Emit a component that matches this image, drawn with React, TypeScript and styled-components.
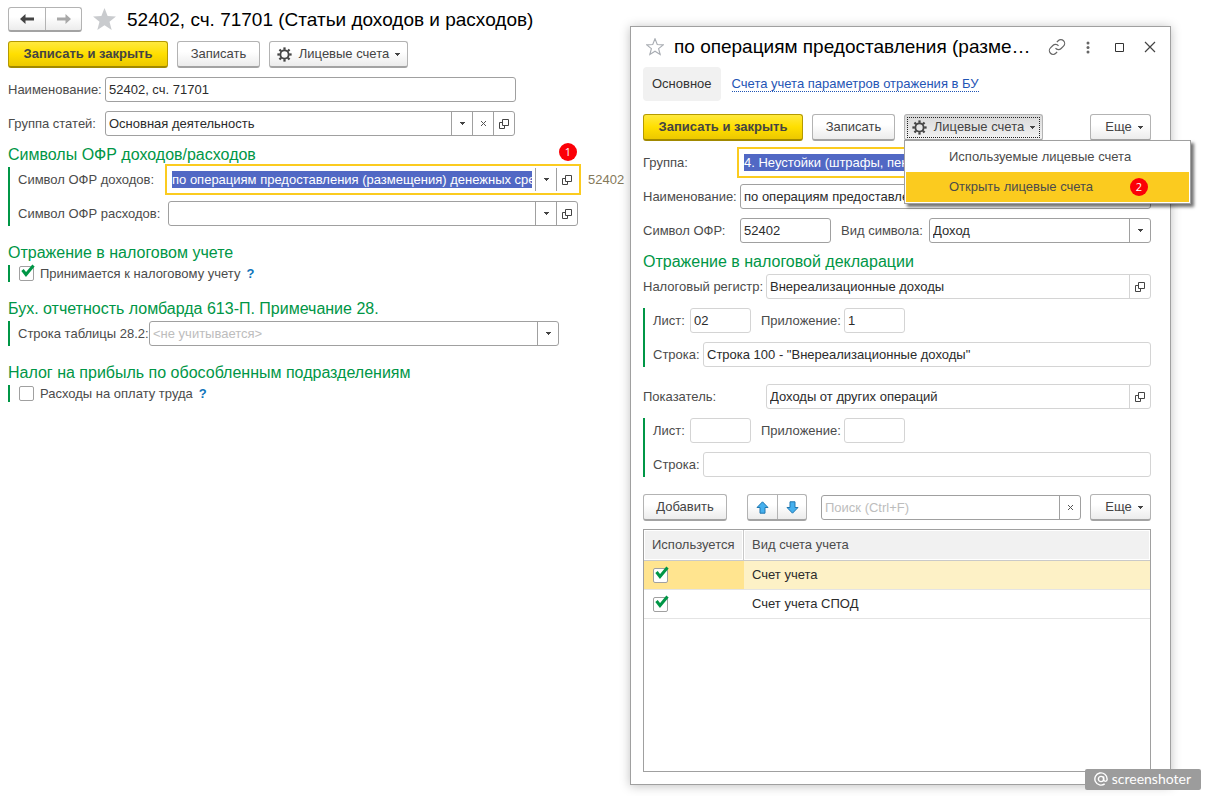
import React from "react";
import styled, { createGlobalStyle, css } from "styled-components";

const green = "#009646";
const line = "#a0a0a0";
const lightLine = "#d4d4d4";
const accent = "#fbcb1f";

const GlobalStyle = createGlobalStyle`
  *, *::before, *::after { box-sizing: border-box; }
  body {
    margin: 0;
    background: #fff;
    color: #4b4b4b;
    font-family: "Liberation Sans", Arial, sans-serif;
    font-size: 13px;
    line-height: 16px;
  }
  button, input, select { font: inherit; color: inherit; margin: 0; }
`;

const Page = styled.div`
  position: relative;
  display: flex;
  min-height: 100vh;
`;

const Main = styled.main`
  flex: 1 1 0;
  min-width: 0;
  padding: 7px 4px 16px 8px;
  display: flex;
  flex-direction: column;
  gap: 9px;
`;

const Bar = styled.div`
  display: flex;
  align-items: center;
  gap: 9px;
`;

const Spacer = styled.div`
  flex: 1;
`;

const Heading = styled.h1`
  margin: 0;
  color: #000;
  font-size: 19px;
  font-weight: 400;
  line-height: 24px;
  white-space: nowrap;
`;

const Button = styled.button<{ $primary?: boolean; $active?: boolean; $width: number }>`
  display: inline-flex;
  align-items: center;
  justify-content: center;
  flex: none;
  min-width: ${(p) => p.$width}px;
  height: 27px;
  padding: 0 6px;
  border: 1px solid #b3b3b3;
  border-bottom: 2px solid #a3a3a3;
  border-radius: 3px;
  background: linear-gradient(#fff 40%, #ececec);
  color: #444;
  white-space: nowrap;
  ${(p) =>
    p.$primary &&
    css`
      border-color: #b59a00 #b59a00 #a18900;
      background: linear-gradient(#ffe93f, #ffdf00 50%, #ecc800);
      font-weight: 700;
    `}
  ${(p) =>
    p.$active &&
    css`
      background: linear-gradient(#d9d9d9, #f2f2f2);
      outline: 1px dotted #222;
      outline-offset: -4px;
    `}
`;

const ButtonText = styled.span`
  margin: 0 6px 0 7px;
`;

const ButtonGroup = styled.div<{ $height: number }>`
  display: flex;
  flex: none;
  height: ${(p) => p.$height}px;
  border: 1px solid #b3b3b3;
  border-bottom: 2px solid #a3a3a3;
  border-radius: 3px;
  background: linear-gradient(#fff 40%, #ececec);
`;

const GroupButton = styled.button<{ $width: number }>`
  display: flex;
  align-items: center;
  justify-content: center;
  width: ${(p) => p.$width}px;
  padding: 0;
  border: 0;
  background: none;
  & + & {
    border-left: 1px solid #b3b3b3;
  }
`;

const IconButton = styled.button`
  display: flex;
  align-items: center;
  justify-content: center;
  flex: none;
  padding: 0;
  border: 0;
  background: none;
`;

const Row = styled.div`
  display: flex;
  align-items: center;
`;

const Label = styled.label<{ $width?: number }>`
  flex: none;
  width: ${(p) => (p.$width ? `${p.$width}px` : "auto")};
  white-space: nowrap;
`;

const SecondLabel = styled(Label)`
  margin-left: 10px;
`;

const Field = styled.div<{ $width?: number; $light?: boolean; $focus?: boolean }>`
  --line: ${(p) => (p.$light ? lightLine : line)};
  position: relative;
  display: flex;
  flex: ${(p) => (p.$width ? `0 1 ${p.$width}px` : "1 1 0")};
  min-width: 0;
  height: 25px;
  border: 1px solid ${(p) => (p.$focus ? "transparent" : "var(--line)")};
  border-radius: 3px;
  background: #fff;
  ${(p) =>
    p.$focus &&
    css`
      outline: 2px solid ${accent};
      outline-offset: 1px;
      border-radius: 0;
    `}
`;

const Input = styled.input<{ $selected?: boolean }>`
  flex: 1 1 0;
  min-width: 0;
  width: 0;
  padding: 0 3px;
  border: 0;
  outline: 0;
  background: none;
  color: #2b2b2b;
  &::placeholder {
    color: #bdbdbd;
    opacity: 1;
  }
  ${(p) =>
    p.$selected &&
    css`
      height: 17px;
      margin: 3px;
      padding: 0;
      background: #5168c4;
      color: #fff;
    `}
`;

const Select = styled.select<{ $empty?: boolean }>`
  flex: 1 1 0;
  min-width: 0;
  margin-right: -21px;
  padding: 0 24px 0 3px;
  border: 0;
  outline: 0;
  appearance: none;
  background: none;
  color: ${(p) => (p.$empty ? "#bdbdbd" : "#2b2b2b")};
`;

const FieldButton = styled.button`
  display: flex;
  align-items: center;
  justify-content: center;
  flex: none;
  width: 21px;
  padding: 0;
  border: 0;
  border-left: 1px solid var(--line);
  background: none;
`;

const SelectArrow = styled.span`
  display: flex;
  align-items: center;
  justify-content: center;
  flex: none;
  width: 21px;
  border-left: 1px solid var(--line);
  pointer-events: none;
`;

const Badge = styled.span`
  display: flex;
  align-items: center;
  justify-content: center;
  width: 18px;
  height: 18px;
  border-radius: 50%;
  background: #fb0007;
  color: #fff;
  font-family: "Open Sans", sans-serif;
  font-size: 11px;
`;

const FieldBadge = styled(Badge)`
  position: absolute;
  top: -25px;
  right: 0;
`;

const Code = styled.span`
  margin-left: 10px;
  color: #85795a;
`;

const Section = styled.section`
  & + & {
    margin-top: 8px;
  }
`;

const SectionTitle = styled.h2`
  margin: 0 0 2px;
  color: ${green};
  font-size: 16px;
  font-weight: 400;
  line-height: 20px;
  white-space: nowrap;
`;

const Group = styled.div`
  display: flex;
  flex-direction: column;
  gap: 9px;
  padding-left: 8px;
  border-left: 2px solid ${green};
`;

const CheckRow = styled.label`
  display: flex;
  align-items: center;
  height: 17px;
  padding-left: 1px;
  gap: 6px;
`;

const CheckCell = styled.span`
  position: relative;
  display: block;
  width: 15px;
  height: 15px;
  svg {
    position: absolute;
    left: 2px;
    top: -2px;
    display: none;
    pointer-events: none;
  }
  input:checked + svg {
    display: block;
  }
`;

const CheckBox = styled.input`
  display: block;
  width: 15px;
  height: 15px;
  appearance: none;
  border: 1px solid ${line};
  border-radius: 2px;
  background: #fff;
`;

const Help = styled.button`
  padding: 0;
  border: 0;
  background: none;
  color: #0f74ba;
  font-weight: 700;
`;

const Dialog = styled.section`
  display: flex;
  flex-direction: column;
  flex: 0 1 541px;
  min-width: 0;
  margin: 26px 36px 11px 0;
  padding: 0 19px 12px 12px;
  border: 1px solid ${line};
  background: #fff;
  box-shadow: 0 1px 10px rgba(0, 0, 0, 0.25);
`;

const DialogHeader = styled.header`
  display: flex;
  align-items: center;
  height: 40px;
  padding-left: 3px;
`;

const DialogTitle = styled.div`
  flex: 1;
  min-width: 0;
  margin: 0 10px;
`;

const DialogTools = styled.div`
  display: flex;
  gap: 13px;
  margin-right: -8px;
`;

const Tabs = styled.nav`
  display: flex;
  align-items: center;
  gap: 11px;
  margin-bottom: 13px;
`;

const Tab = styled.button`
  height: 34px;
  padding: 0 9px;
  border: 0;
  border-radius: 4px;
  background: #f1f1f1;
  color: #333;
`;

const TabLink = styled.a`
  border-bottom: 1px dotted #1f55b5;
  color: #1f55b5;
  line-height: 14px;
  text-decoration: none;
  white-space: nowrap;
`;

const Form = styled.div`
  display: flex;
  flex-direction: column;
  gap: 9px;
  padding: 9px 0 17px;
`;

const Indicator = styled(Row)`
  margin-top: 8px;
`;

const MenuHost = styled.div`
  position: relative;
  display: flex;
`;

const Menu = styled.div`
  position: absolute;
  z-index: 2;
  top: 26px;
  left: 0;
  width: 287px;
  padding: 1px;
  border: 1px solid ${line};
  background: #fff;
  box-shadow: 3px 3px 3px rgba(0, 0, 0, 0.55);
`;

const MenuItem = styled.button<{ $current?: boolean }>`
  display: flex;
  align-items: center;
  justify-content: space-between;
  width: 100%;
  height: 30px;
  padding: 0 41px 0 43px;
  border: 0;
  background: ${(p) => (p.$current ? accent : "#fff")};
`;

const TableFrame = styled.div`
  flex: 1;
  min-height: 120px;
  margin-top: 8px;
  border: 1px solid ${line};
`;

const Table = styled.table`
  width: 100%;
  border-spacing: 0;
  table-layout: fixed;
`;

const HeadCell = styled.th<{ $first?: boolean }>`
  width: ${(p) => (p.$first ? "100px" : "auto")};
  height: 31px;
  padding: 0 0 0 8px;
  border-right: ${(p) => (p.$first ? "1px solid #c9c9c9" : "0")};
  border-bottom: 1px solid #c9c9c9;
  background: #f1f1f1;
  box-shadow: inset 0 0 0 1px #fff;
  font-weight: 400;
  text-align: left;
`;

const Cell = styled.td<{ $tone?: string }>`
  height: 29px;
  padding: 0 8px;
  border-bottom: 1px solid #e4e4e4;
  background: ${(p) => p.$tone ?? "#fff"};
  color: #2b2b2b;
  &:first-child {
    padding-left: 9px;
  }
`;

const Watermark = styled.div`
  position: absolute;
  z-index: 3;
  right: 6px;
  bottom: 6px;
  display: flex;
  align-items: center;
  gap: 4px;
  height: 21px;
  padding: 0 10px 1px 9px;
  border-radius: 2px;
  background: #9c9c9c;
  color: #fff;
  font-family: Lato, sans-serif;
  font-size: 14px;
`;

const Caret = () => (
  <svg width="5" height="3" viewBox="0 0 5 3" aria-hidden>
    <path d="M0 0h5v1H4v1H3v1H2V2H1V1H0z" fill="#444" />
  </svg>
);

const OpenIcon = () => (
  <svg width="10" height="10" viewBox="0 0 10 10" fill="none" stroke="#444" aria-hidden>
    <path d="M3.5.5h6v6h-6zM3 3.5H.5v6h5V7" />
  </svg>
);

const CrossIcon = () => (
  <svg width="7" height="7" viewBox="0 0 7 7" stroke="#555" aria-hidden>
    <path d="M1 1l5 5M6 1L1 6" />
  </svg>
);

const CheckMark = () => (
  <svg width="14" height="14" viewBox="0 0 14 14" fill="none" stroke={green} strokeWidth="3" aria-hidden>
    <path d="M1.5 6L5 10.5L12.5 1.5" />
  </svg>
);

const Gear = () => (
  <svg width="15" height="15" viewBox="-8 -8 16 16" fill="none" stroke="#444" aria-hidden>
    <circle r="4.4" strokeWidth="2" />
    {[0, 45, 90, 135, 180, 225, 270, 315].map((a) => (
      <path key={a} d="M0-5V-7.6" strokeWidth="2.4" transform={`rotate(${a})`} />
    ))}
  </svg>
);

const NavArrow = ({ color, flip }: { color: string; flip?: boolean }) => (
  <svg width="14" height="10" viewBox="0 0 14 10" aria-hidden>
    <path
      d="M5.5 0L0 5l5.5 5V6.5H14v-3H5.5z"
      fill={color}
      transform={flip ? "translate(14 0) scale(-1 1)" : undefined}
    />
  </svg>
);

const MoveArrow = ({ down }: { down?: boolean }) => (
  <svg width="13" height="13" viewBox="0 0 13 13" aria-hidden>
    <path
      d="M6.5.8L12 6.5H9v5.7H4V6.5H1z"
      fill="#45b0ee"
      stroke="#2077b0"
      transform={down ? "translate(0 13) scale(1 -1)" : undefined}
    />
  </svg>
);

const Star = ({ size, outline }: { size: number; outline?: boolean }) => (
  <svg width={size} height={size} viewBox="0 0 24 24" aria-hidden>
    <path
      d="M12 1l3 7.6 8 .5-6.2 5.1 2.1 7.800L12 17.600 5.100 22l2.100-7.800L1 9.100l8-.5z"
      fill={outline ? "none" : "#c9cbce"}
      stroke={outline ? "#a9adb3" : "none"}
      strokeWidth="1.5"
    />
  </svg>
);

const LinkIcon = () => (
  <svg width="18" height="18" viewBox="0 0 24 24" fill="none" stroke="#666" strokeWidth="1.6" aria-hidden>
    <path d="M10 13.5a5 5 0 0 0 7.5.5l3.200-3.200a5 5 0 0 0-7.100-7.100L11.800 5.500" />
    <path d="M14 10.5a5 5 0 0 0-7.500-.5l-3.200 3.200a5 5 0 0 0 7.100 7.100l1.800-1.800" />
  </svg>
);

const DotsIcon = () => (
  <svg width="18" height="18" viewBox="0 0 18 18" fill="#666" aria-hidden>
    <circle cx="9" cy="5" r="1.5" />
    <circle cx="9" cy="9.500" r="1.5" />
    <circle cx="9" cy="14" r="1.5" />
  </svg>
);

const MaximizeIcon = () => (
  <svg width="18" height="18" viewBox="0 0 18 18" fill="none" stroke="#333" aria-hidden>
    <path d="M5.5 5.5h8v8h-8z" />
  </svg>
);

const CloseIcon = () => (
  <svg width="18" height="18" viewBox="0 0 18 18" stroke="#444" strokeWidth="1.2" aria-hidden>
    <path d="M4 4l10 10M14 4L4 14" />
  </svg>
);

const AtIcon = () => (
  <svg width="14" height="14" viewBox="0 0 24 24" fill="none" stroke="#fff" strokeWidth="2.4" aria-hidden>
    <circle cx="12" cy="12" r="4.5" />
    <path d="M16.5 7.5V13a3 3 0 0 0 6 0v-1a10.500 10.500 0 1 0-4.200 8.400" />
  </svg>
);

const AccountsButton = ({ active }: { active?: boolean }) => (
  <Button type="button" $width={139} $active={active} aria-haspopup="menu">
    <Gear />
    <ButtonText>Лицевые счета</ButtonText>
    <Caret />
  </Button>
);

const MoreButton = () => (
  <Button type="button" $width={61}>
    <ButtonText>Еще</ButtonText>
    <Caret />
  </Button>
);

const SaveButtons = () => (
  <>
    <Button type="button" $primary $width={160}>Записать и закрыть</Button>
    <Button type="button" $width={83}>Записать</Button>
  </>
);

const DropButton = () => (
  <FieldButton type="button" aria-label="Выбрать">
    <Caret />
  </FieldButton>
);

const OpenButton = () => (
  <FieldButton type="button" aria-label="Открыть">
    <OpenIcon />
  </FieldButton>
);

const ClearButton = () => (
  <FieldButton type="button" aria-label="Очистить">
    <CrossIcon />
  </FieldButton>
);

const Check = ({ checked, label }: { checked?: boolean; label?: string }) => (
  <CheckCell>
    <CheckBox type="checkbox" defaultChecked={checked} aria-label={label} />
    <CheckMark />
  </CheckCell>
);

const SheetGroup = ({ id, sheet, appendix, row }: { id: string; sheet: string; appendix: string; row: string }) => (
  <Group>
    <Row>
      <Label htmlFor={`${id}-sheet`} $width={37}>Лист:</Label>
      <Field $light $width={61}>
        <Input id={`${id}-sheet`} defaultValue={sheet} />
      </Field>
      <SecondLabel htmlFor={`${id}-app`} $width={83}>Приложение:</SecondLabel>
      <Field $light $width={61}>
        <Input id={`${id}-app`} defaultValue={appendix} />
      </Field>
    </Row>
    <Row>
      <Label htmlFor={`${id}-row`} $width={50}>Строка:</Label>
      <Field $light>
        <Input id={`${id}-row`} defaultValue={row} />
      </Field>
    </Row>
  </Group>
);

const HeaderBar = styled(Bar)`
  height: 25px;
  gap: 10px;
`;

const ArrowsSlot = styled.div`
  margin: 0 5px 0 11px;
`;

const accounts = [
  { name: "Счет учета", current: true },
  { name: "Счет учета СПОД", current: false },
];

export default function App() {
  return (
    <>
      <GlobalStyle />
      <Page>
        <Main>
          <HeaderBar as="header">
            <ButtonGroup $height={25}>
              <GroupButton type="button" $width={36} aria-label="Назад">
                <NavArrow color="#444" />
              </GroupButton>
              <GroupButton type="button" $width={36} aria-label="Вперед">
                <NavArrow color="#a8a8a8" flip />
              </GroupButton>
            </ButtonGroup>
            <IconButton type="button" aria-label="В избранное">
              <Star size={25} />
            </IconButton>
            <Heading>52402, сч. 71701 (Статьи доходов и расходов)</Heading>
          </HeaderBar>

          <Bar>
            <SaveButtons />
            <AccountsButton />
          </Bar>

          <Row>
            <Label htmlFor="name" $width={97}>Наименование:</Label>
            <Field $width={411}>
              <Input id="name" defaultValue="52402, сч. 71701" />
            </Field>
          </Row>
          <Row>
            <Label htmlFor="group" $width={97}>Группа статей:</Label>
            <Field $width={410}>
              <Input id="group" defaultValue="Основная деятельность" />
              <DropButton />
              <ClearButton />
              <OpenButton />
            </Field>
          </Row>

          <Section>
            <SectionTitle>Символы ОФР доходов/расходов</SectionTitle>
            <Group>
              <Row>
                <Label htmlFor="income" $width={150}>Символ ОФР доходов:</Label>
                <Field $width={410} $focus>
                  <Input
                    id="income"
                    $selected
                    defaultValue="по операциям предоставления (размещения) денежных средств"
                  />
                  <DropButton />
                  <OpenButton />
                  <FieldBadge>1</FieldBadge>
                </Field>
                <Code>52402</Code>
              </Row>
              <Row>
                <Label htmlFor="expense" $width={150}>Символ ОФР расходов:</Label>
                <Field $width={410}>
                  <Input id="expense" />
                  <DropButton />
                  <OpenButton />
                </Field>
              </Row>
            </Group>
          </Section>

          <Section>
            <SectionTitle>Отражение в налоговом учете</SectionTitle>
            <Group>
              <Row>
                <CheckRow>
                  <Check checked />
                  Принимается к налоговому учету
                  <Help type="button">?</Help>
                </CheckRow>
              </Row>
            </Group>
          </Section>

          <Section>
            <SectionTitle>Бух. отчетность ломбарда 613-П. Примечание 28.</SectionTitle>
            <Group>
              <Row>
                <Label htmlFor="line282" $width={131}>Строка таблицы 28.2:</Label>
                <Field $width={410}>
                  <Select id="line282" $empty>
                    <option>&lt;не учитывается&gt;</option>
                  </Select>
                  <SelectArrow>
                    <Caret />
                  </SelectArrow>
                </Field>
              </Row>
            </Group>
          </Section>

          <Section>
            <SectionTitle>Налог на прибыль по обособленным подразделениям</SectionTitle>
            <Group>
              <Row>
                <CheckRow>
                  <Check />
                  Расходы на оплату труда
                  <Help type="button">?</Help>
                </CheckRow>
              </Row>
            </Group>
          </Section>
        </Main>

        <Dialog role="dialog" aria-labelledby="dialog-title">
          <DialogHeader>
            <IconButton type="button" aria-label="В избранное">
              <Star size={18} outline />
            </IconButton>
            <DialogTitle>
              <Heading as="h2" id="dialog-title">по операциям предоставления (разме…</Heading>
            </DialogTitle>
            <DialogTools>
              <IconButton type="button" aria-label="Ссылка"><LinkIcon /></IconButton>
              <IconButton type="button" aria-label="Действия"><DotsIcon /></IconButton>
              <IconButton type="button" aria-label="Развернуть"><MaximizeIcon /></IconButton>
              <IconButton type="button" aria-label="Закрыть"><CloseIcon /></IconButton>
            </DialogTools>
          </DialogHeader>

          <Tabs>
            <Tab type="button">Основное</Tab>
            <TabLink href="#accounts">Счета учета параметров отражения в БУ</TabLink>
          </Tabs>

          <Bar>
            <SaveButtons />
            <MenuHost>
              <AccountsButton active />
              <Menu role="menu">
                <MenuItem type="button" role="menuitem">Используемые лицевые счета</MenuItem>
                <MenuItem type="button" role="menuitem" $current>
                  Открыть лицевые счета
                  <Badge>2</Badge>
                </MenuItem>
              </Menu>
            </MenuHost>
            <Spacer />
            <MoreButton />
          </Bar>

          <Form>
            <Row>
              <Label htmlFor="d-group" $width={97}>Группа:</Label>
              <Field $focus>
                <Input id="d-group" $selected defaultValue="4. Неустойки (штрафы, пени)" />
              </Field>
            </Row>
            <Row>
              <Label htmlFor="d-name" $width={97}>Наименование:</Label>
              <Field>
                <Input id="d-name" defaultValue="по операциям предоставления (размещения) денежных средств" />
              </Field>
            </Row>
            <Row>
              <Label htmlFor="d-symbol" $width={97}>Символ ОФР:</Label>
              <Field $width={91}>
                <Input id="d-symbol" defaultValue="52402" />
              </Field>
              <SecondLabel htmlFor="d-kind" $width={88}>Вид символа:</SecondLabel>
              <Field>
                <Select id="d-kind">
                  <option>Доход</option>
                </Select>
                <SelectArrow>
                  <Caret />
                </SelectArrow>
              </Field>
            </Row>

            <Section>
              <SectionTitle>Отражение в налоговой декларации</SectionTitle>
              <Row>
                <Label htmlFor="d-register" $width={123}>Налоговый регистр:</Label>
                <Field $light>
                  <Input id="d-register" defaultValue="Внереализационные доходы" />
                  <OpenButton />
                </Field>
              </Row>
            </Section>
            <SheetGroup id="register" sheet="02" appendix="1" row={'Строка 100 - "Внереализационные доходы"'} />
            <Indicator>
              <Label htmlFor="d-indicator" $width={123}>Показатель:</Label>
              <Field $light>
                <Input id="d-indicator" defaultValue="Доходы от других операций" />
                <OpenButton />
              </Field>
            </Indicator>
            <SheetGroup id="indicator" sheet="" appendix="" row="" />
          </Form>

          <Bar>
            <Button type="button" $width={84}>Добавить</Button>
            <ArrowsSlot>
              <ButtonGroup $height={27}>
                <GroupButton type="button" $width={29} aria-label="Вверх"><MoveArrow /></GroupButton>
                <GroupButton type="button" $width={29} aria-label="Вниз"><MoveArrow down /></GroupButton>
              </ButtonGroup>
            </ArrowsSlot>
            <Field>
              <Input type="text" placeholder="Поиск (Ctrl+F)" aria-label="Поиск" />
              <ClearButton />
            </Field>
            <MoreButton />
          </Bar>

          <TableFrame>
            <Table>
              <thead>
                <tr>
                  <HeadCell $first>Используется</HeadCell>
                  <HeadCell>Вид счета учета</HeadCell>
                </tr>
              </thead>
              <tbody>
                {accounts.map((a) => (
                  <tr key={a.name}>
                    <Cell $tone={a.current ? "#ffe48f" : undefined}>
                      <Check checked label={a.name} />
                    </Cell>
                    <Cell $tone={a.current ? "#fdf1c6" : undefined}>{a.name}</Cell>
                  </tr>
                ))}
              </tbody>
            </Table>
          </TableFrame>
        </Dialog>

        <Watermark>
          <AtIcon />
          screenshoter
        </Watermark>
      </Page>
    </>
  );
}
